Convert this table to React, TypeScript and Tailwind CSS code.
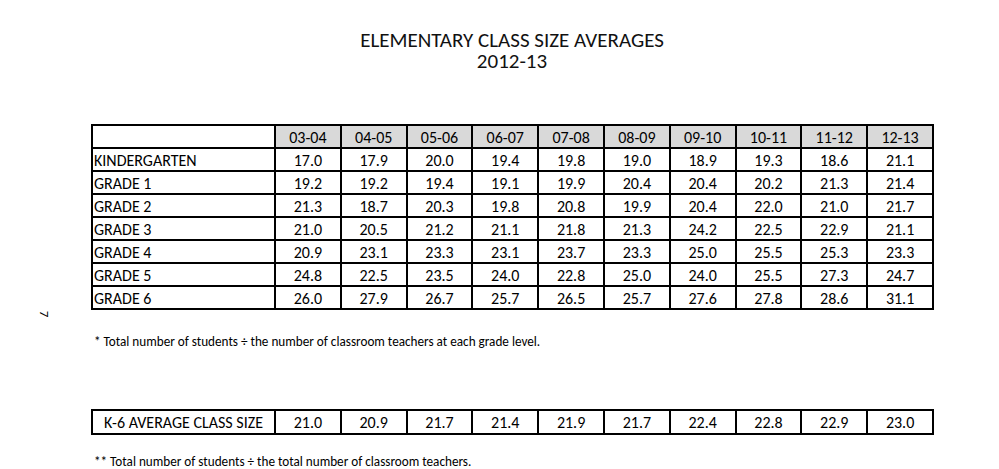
import React from 'react';

const years = ['03-04', '04-05', '05-06', '06-07', '07-08', '08-09', '09-10', '10-11', '11-12', '12-13'];

const rows: { label: string; values: string[] }[] = [
  { label: 'KINDERGARTEN', values: ['17.0', '17.9', '20.0', '19.4', '19.8', '19.0', '18.9', '19.3', '18.6', '21.1'] },
  { label: 'GRADE 1', values: ['19.2', '19.2', '19.4', '19.1', '19.9', '20.4', '20.4', '20.2', '21.3', '21.4'] },
  { label: 'GRADE 2', values: ['21.3', '18.7', '20.3', '19.8', '20.8', '19.9', '20.4', '22.0', '21.0', '21.7'] },
  { label: 'GRADE 3', values: ['21.0', '20.5', '21.2', '21.1', '21.8', '21.3', '24.2', '22.5', '22.9', '21.1'] },
  { label: 'GRADE 4', values: ['20.9', '23.1', '23.3', '23.1', '23.7', '23.3', '25.0', '25.5', '25.3', '23.3'] },
  { label: 'GRADE 5', values: ['24.8', '22.5', '23.5', '24.0', '22.8', '25.0', '24.0', '25.5', '27.3', '24.7'] },
  { label: 'GRADE 6', values: ['26.0', '27.9', '26.7', '25.7', '26.5', '25.7', '27.6', '27.8', '28.6', '31.1'] },
];

const averages = ['21.0', '20.9', '21.7', '21.4', '21.9', '21.7', '22.4', '22.8', '22.9', '23.0'];

const Cols = () => (
  <colgroup>
    <col className="w-[183px]" />
    {years.map((y) => (
      <col key={y} className="w-[65.8px]" />
    ))}
  </colgroup>
);

const App = () => {
  return (
    <div
      className="flex w-[999px] h-[469px] overflow-hidden bg-white text-black"
      style={{ fontFamily: 'Carlito, Calibri, Lato, sans-serif' }}
    >
      {/* page number in the margin */}
      <div className="w-[91px] shrink-0 flex flex-col items-center">
        <div className="mt-[307px] -ml-[3px] rotate-90 text-[13px] leading-[14px]">7</div>
      </div>

      <div className="w-[842px] flex flex-col">
        <div className="pt-[30px] text-center text-[21px] leading-[21px] text-[#111]">
          <div>ELEMENTARY CLASS SIZE AVERAGES</div>
          <div>2012-13</div>
        </div>

        <table className="mt-[52px] table-fixed border-collapse border-2 border-black w-[841px] text-[16px] leading-none">
          <Cols />
          <thead>
            <tr>
              <th className="h-[23px] pt-[3px] border-2 border-black bg-white" />
              {years.map((y) => (
                <th key={y} className="h-[23px] pt-[3px] border-2 border-black bg-[#d9d9d9] font-normal text-center">
                  {y}
                </th>
              ))}
            </tr>
          </thead>
          <tbody>
            {rows.map((r) => (
              <tr key={r.label}>
                <td className="h-[23px] pt-[2px] border-2 border-black pl-[1px] text-left">{r.label}</td>
                {r.values.map((v, i) => (
                  <td key={i} className="h-[23px] pt-[2px] border-2 border-black text-center">
                    {v}
                  </td>
                ))}
              </tr>
            ))}
          </tbody>
        </table>

        <p className="mt-[24px] pl-[3px] text-[13.2px] leading-[16px]">
          * Total number of students ÷ the number of classroom teachers at each grade level.
        </p>

        <table className="mt-[59px] table-fixed border-collapse border-2 border-black w-[841px] text-[16px] leading-none">
          <Cols />
          <tbody>
            <tr>
              <td className="h-[24px] pt-[1px] border-2 border-black text-center">K-6 AVERAGE CLASS SIZE</td>
              {averages.map((v, i) => (
                <td key={i} className="h-[24px] pt-[1px] border-2 border-black text-center">
                  {v}
                </td>
              ))}
            </tr>
          </tbody>
        </table>

        <p className="mt-[20px] pl-[3px] text-[13.2px] leading-[14px]">
          ** Total number of students ÷ the total number of classroom teachers.
        </p>
      </div>
    </div>
  );
};

export default App;
